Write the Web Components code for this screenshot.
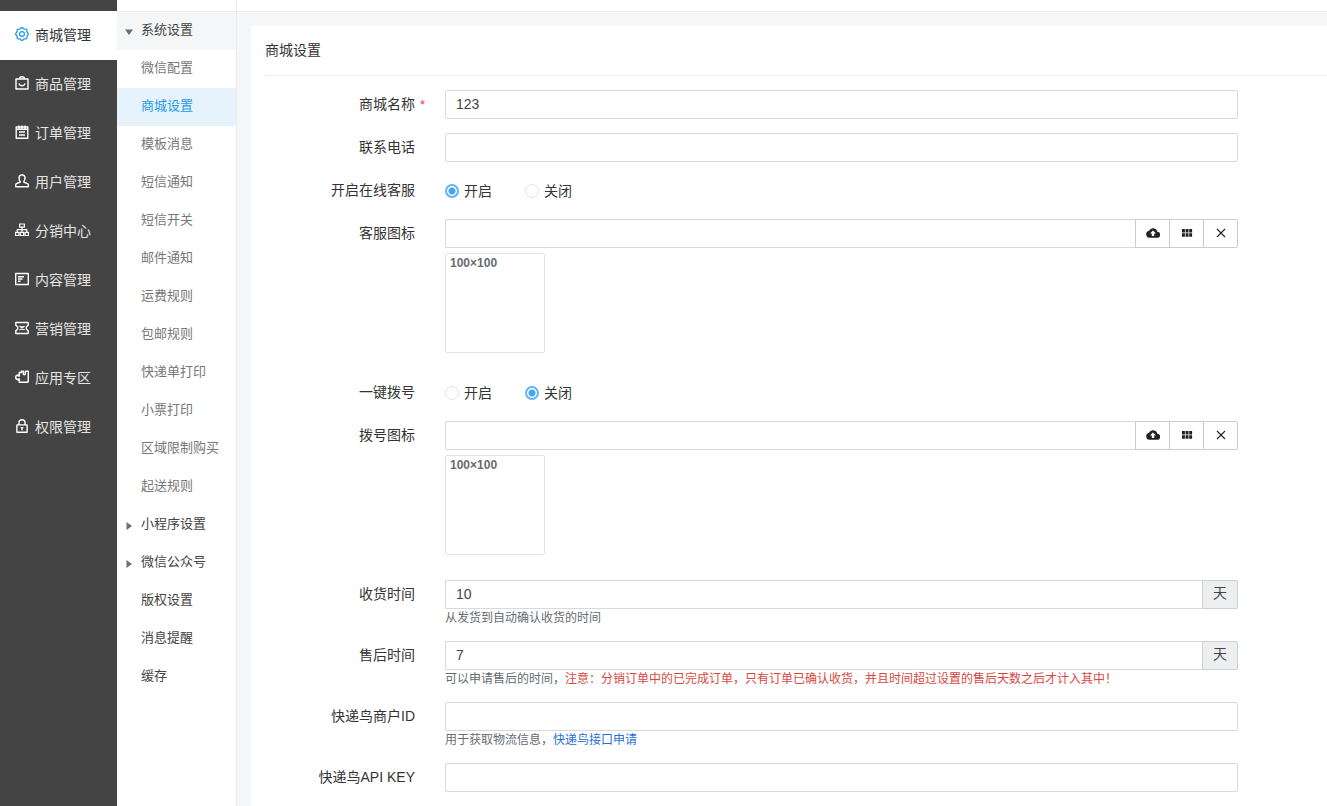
<!DOCTYPE html>
<html lang="zh-CN">
<head>
<meta charset="utf-8">
<title>商城设置</title>
<style>
  html, body { margin: 0; }
  body { font-family: "Liberation Sans", "Noto Sans CJK SC", sans-serif; font-size: 14px; color: #333; background: #f5f6f8; }
</style>
</head>
<body>
<mall-app>
  <main-nav slot="nav">
    <nav-item icon="gear" active>商城管理</nav-item>
    <nav-item icon="bag">商品管理</nav-item>
    <nav-item icon="order">订单管理</nav-item>
    <nav-item icon="user">用户管理</nav-item>
    <nav-item icon="tree">分销中心</nav-item>
    <nav-item icon="article">内容管理</nav-item>
    <nav-item icon="ticket">营销管理</nav-item>
    <nav-item icon="puzzle">应用专区</nav-item>
    <nav-item icon="lock">权限管理</nav-item>
  </main-nav>
  <sub-nav slot="sub">
    <sub-item group="open">系统设置</sub-item>
    <sub-item>微信配置</sub-item>
    <sub-item active>商城设置</sub-item>
    <sub-item>模板消息</sub-item>
    <sub-item>短信通知</sub-item>
    <sub-item>短信开关</sub-item>
    <sub-item>邮件通知</sub-item>
    <sub-item>运费规则</sub-item>
    <sub-item>包邮规则</sub-item>
    <sub-item>快递单打印</sub-item>
    <sub-item>小票打印</sub-item>
    <sub-item>区域限制购买</sub-item>
    <sub-item>起送规则</sub-item>
    <sub-item group="closed">小程序设置</sub-item>
    <sub-item group="closed">微信公众号</sub-item>
    <sub-item group="leaf">版权设置</sub-item>
    <sub-item group="leaf">消息提醒</sub-item>
    <sub-item group="leaf">缓存</sub-item>
  </sub-nav>
  <settings-card heading="商城设置">
    <text-field label="商城名称" value="123" required></text-field>
    <text-field label="联系电话"></text-field>
    <radio-field label="开启在线客服" value="1"></radio-field>
    <upload-field label="客服图标" size="100×100"></upload-field>
    <radio-field label="一键拨号" value="0"></radio-field>
    <upload-field label="拨号图标" size="100×100"></upload-field>
    <text-field label="收货时间" value="10" unit="天"><span>从发货到自动确认收货的时间</span></text-field>
    <text-field label="售后时间" value="7" unit="天"><span>可以申请售后的时间，</span><help-warning>注意：分销订单中的已完成订单，只有订单已确认收货，并且时间超过设置的售后天数之后才计入其中！</help-warning></text-field>
    <text-field label="快递鸟商户ID"><span>用于获取物流信息，</span><help-link>快递鸟接口申请</help-link></text-field>
    <text-field label="快递鸟API KEY"></text-field>
  </settings-card>
</mall-app>

<script>
const svg = (body, size = 14) =>
  `<svg width="${size}" height="${size}" viewBox="0 0 14 14" fill="none" stroke="currentColor" stroke-width="1.4" stroke-linejoin="round" aria-hidden="true">${body}</svg>`;

const scallop = () => {
  const points = [];
  for (let i = 0; i <= 96; i++) {
    const a = i / 96 * Math.PI * 2;
    const r = 5.9 + 0.5 * Math.cos(8 * a);
    points.push((7 + r * Math.cos(a)).toFixed(2) + ' ' + (7 + r * Math.sin(a)).toFixed(2));
  }
  return 'M' + points.join('L') + 'Z';
};

const ICONS = {
  gear: svg(`<path d="${scallop()}" stroke-width="1.3"/><circle cx="7" cy="7" r="2.4" stroke-width="1.2"/>`),
  bag: svg('<path d="M1 3h12v10H1z"/><path d="M4.7 3V2.2Q4.7.7 7 .7t2.3 1.5V3M4 7.4q.6 2.4 3 2.4t3-2.4"/>'),
  order: svg('<path d="M1.2 2h11.6v11.3H1.2zM1.2 4.2h11.6M4 7h6M4 10h6M4 .4v3M7 .4v3M10 .4v3"/>'),
  user: svg('<path d="M7 .9c2 0 3 1.4 3 3.2S9 7.6 8.7 8L12.5 9.7q.8.4.8 1.3v1.7H.7V11q0-.9.8-1.3L5.3 8C5 7.6 4 5.9 4 4.1S5 .9 7 .9z"/>'),
  tree: svg('<path d="M4.6 1h4.800v3.200H4.600zM.6 9.300h3.300v3.200H.6zM5.350 9.300h3.300v3.200h-3.300zM10.100 9.300h3.300v3.200h-3.300zM7 4.200v5M2.200 9V6.700h9.600V9" stroke-width="1.200"/>'),
  article: svg('<path d="M.7 1.500h12.600v11H.7zM3 4.700h6M3 7h4.500M3 9.300h2.500"/>'),
  ticket: svg('<path d="M.8 1.500h12.400v2.700L11.300 6v2l1.900 1.800v2.700H.8V9.800L2.700 8V6L.8 4.200z"/><path d="M4.500 5l5 4M9.500 5l-5 4M7 5v4" stroke-width="1.200"/>'),
  puzzle: svg('<path d="M4.300 5V2.500H6.300V1.200h2v2.300q0 1.200 1 1.200t1-1.200V1.200h3v9.600q0 1.500-1.500 1.500H4.300V9H3.300L2.900 9.800Q.7 9.400.7 7.400T2.900 5l.4.900h1z" stroke-width="1.500"/>'),
  lock: svg('<path d="M1.900 5.900h10.200v7.300H1.900zM4 5.900V3.600Q4 .8 7 .8t3 2.800v2.300M7 8v3.300M5.600 8.600h2.800"/>'),
  cloud: svg('<path fill="currentColor" stroke="none" fill-rule="evenodd" d="M11.300 5.800A4.400 4.400 0 0 0 3 4.700 3.600 3.600 0 0 0 3.500 11.800H11A3 3 0 0 0 11.300 5.800zM8.200 7.500V10H5.800V7.500H4L7 4.500 10 7.500z"/>'),
  grid: svg('<path fill="currentColor" stroke="none" d="M2 3h2.900v3.500H2zM5.600 3h2.900v3.500H5.600zM9.200 3h2.900v3.500H9.200zM2 7.300h2.900v3.500H2zM5.600 7.300h2.900v3.500H5.600zM9.200 7.300h2.900v3.500H9.200z"/>'),
  close: svg('<path d="M3 3l8 8M11 3l-8 8" stroke-width="1.100"/>'),
};

class Base extends HTMLElement {
  connectedCallback() {
    if (this.shadowRoot) return;
    this.attachShadow({ mode: 'open' }).innerHTML = this.render();
  }
  attr(name) { return this.getAttribute(name) || ''; }
}

customElements.define('mall-app', class extends Base {
  render() {
    return `<style>
      :host { display: grid; grid-template-columns: 117px 120px 1fr; grid-template-rows: 12px 1fr; min-height: 100vh; }
      slot[name=nav]::slotted(*) { grid-row: 1 / 3; }
      .corner, header { background: #fff; border-bottom: 1px solid #ebedf0; }
      .corner { border-right: 1px solid #ebedf0; }
      main { padding: 14px 0 0 14px; display: grid; }
    </style>
    <slot name="nav"></slot><div class="corner"></div><header></header>
    <slot name="sub"></slot><main><slot></slot></main>`;
  }
});

customElements.define('main-nav', class extends Base {
  render() {
    return `<style>
      :host { display: block; background: #444; padding-top: 11px; }
      nav { display: flex; flex-direction: column; }
    </style><nav><slot></slot></nav>`;
  }
});

customElements.define('nav-item', class extends Base {
  render() {
    return `<style>
      :host { display: block; color: #fff; }
      :host([active]) { background: #fff; color: #1e9be9; }
      a { display: flex; align-items: center; gap: 6px; height: 49px; box-sizing: border-box; padding: 0 0 2px 15px; color: inherit; text-decoration: none; }
      span { color: #e4e4e4; line-height: 20px; }
      :host([active]) span { color: #333; }
      svg { flex: none; margin-bottom: 2px; }
    </style><a href="#">${ICONS[this.attr('icon')]}<span><slot></slot></span></a>`;
  }
});

customElements.define('sub-nav', class extends Base {
  render() {
    return `<style>
      :host { display: block; background: #fff; border-right: 1px solid #ebedf0; }
      nav { display: flex; flex-direction: column; }
    </style><nav><slot></slot></nav>`;
  }
});

customElements.define('sub-item', class extends Base {
  render() {
    return `<style>
      :host { display: block; font-size: 13px; color: #777; }
      :host([group]) { color: #444; }
      :host([group=open]) { background: #f5f6f8; }
      :host([active]) { background: #e6f2fc; color: #1e9be9; }
      a { display: grid; grid-template-columns: 8px 1fr; column-gap: 8px; align-items: center; height: 38px; box-sizing: border-box; padding: 0 0 2px 8px; line-height: 20px; color: inherit; text-decoration: none; white-space: nowrap; }
      svg { display: block; width: 8px; height: 8px; margin-top: 4px; fill: #6b7075; visibility: hidden; }
      :host([group=open]) svg, :host([group=closed]) svg { visibility: visible; }
      :host([group=closed]) svg { transform: rotate(-90deg); }
    </style><a href="#"><svg viewBox="0 0 8 8" aria-hidden="true"><path d="M0 1.500h8L4 7z"/></svg><span><slot></slot></span></a>`;
  }
});

customElements.define('settings-card', class extends Base {
  render() {
    return `<style>
      :host { display: block; background: #fff; padding: 0 0 14px 14px; }
      h1 { margin: 0 0 14px; font-size: 14px; font-weight: 400; line-height: 20px; padding: 14px 0 15px; border-bottom: 1px solid #ebedf0; }
      form { display: flex; flex-direction: column; gap: 14px; margin-right: 89px; }
    </style><h1>${this.attr('heading')}</h1><form><slot></slot></form>`;
  }
});

const ROW = `
  :host { display: block; }
  .row { display: grid; grid-template-columns: 150px minmax(0, 1fr); column-gap: 30px; align-items: start; }
  .label { text-align: right; line-height: 20px; padding-top: 4px; white-space: nowrap; }
  .group { display: flex; height: 29px; }
  input[type=text] { flex: 1; min-width: 0; height: 29px; box-sizing: border-box; margin: 0; border: 1px solid #d9d9d9; border-radius: 2px; padding: 0 10px 2px; font: inherit; color: #444; background: #fff; outline: 0; }
  .group input:not(:last-child) { border-right: 0; border-radius: 2px 0 0 2px; }
`;

customElements.define('text-field', class extends Base {
  render() {
    const unit = this.attr('unit');
    return `<style>${ROW}
      .required .label { position: relative; }
      .star { position: absolute; left: calc(100% + 5px); top: 5px; color: #f33; font-size: 13px; }
      .unit { width: 36px; box-sizing: border-box; border: 1px solid #cdd0d3; border-radius: 0 2px 2px 0; background: #eceef0; text-align: center; line-height: 25px; color: #444; }
      .help { font-size: 12px; line-height: 18px; color: #666c72; white-space: nowrap; }
    </style>
    <div class="row ${this.hasAttribute('required') ? 'required' : ''}">
      <label class="label" for="field">${this.attr('label')}${this.hasAttribute('required') ? '<span class="star">*</span>' : ''}</label>
      <div><div class="group"><input type="text" id="field" value="${this.attr('value')}">${unit ? `<span class="unit">${unit}</span>` : ''}</div>
      ${this.children.length ? '<div class="help"><slot></slot></div>' : ''}</div>
    </div>`;
  }
});

customElements.define('radio-field', class extends Base {
  render() {
    const option = (value, text) => `<label><input type="radio" name="choice" value="${value}" ${this.attr('value') === value ? 'checked' : ''}><span>${text}</span></label>`;
    return `<style>${ROW}
      .options { display: flex; gap: 33px; height: 29px; align-items: center; }
      .options label { display: flex; align-items: center; gap: 5px; line-height: 20px; }
      input[type=radio] { appearance: none; width: 14px; height: 14px; box-sizing: border-box; margin: 0; border: 1px solid #e2e2e2; border-radius: 50%; background: #fff; }
      input[type=radio]:checked { border: 2px solid #5fb4f7; background: radial-gradient(circle, #42a5f5 3px, #fff 4px); }
    </style>
    <div class="row">
      <div class="label" id="title">${this.attr('label')}</div>
      <div class="options" role="radiogroup" aria-labelledby="title">${option('1', '开启')}${option('0', '关闭')}</div>
    </div>`;
  }
});

customElements.define('upload-field', class extends Base {
  render() {
    return `<style>${ROW}
      button { width: 34px; height: 29px; box-sizing: border-box; padding: 0 0 2px; margin: 0; display: flex; align-items: center; justify-content: center; border: 1px solid #ccc; border-right: 0; background: #fff; color: #222; }
      button:last-child { width: 35px; border-right: 1px solid #ccc; border-radius: 0 2px 2px 0; }
      .preview { width: 100px; height: 100px; box-sizing: border-box; margin: 5px 0 11px; border: 1px solid #e3e3e3; border-radius: 2px; padding: 1px 4px; font-size: 12px; font-weight: 700; line-height: 16px; color: #666c72; }
    </style>
    <div class="row">
      <label class="label" for="field">${this.attr('label')}</label>
      <div><div class="group"><input type="text" id="field">
        <button type="button" aria-label="上传">${ICONS.cloud}</button>
        <button type="button" aria-label="选择">${ICONS.grid}</button>
        <button type="button" aria-label="清除">${ICONS.close}</button></div>
      <div class="preview">${this.attr('size')}</div></div>
    </div>`;
  }
});

customElements.define('help-warning', class extends Base {
  render() { return '<style>:host { display: inline; color: #d9483f; }</style><slot></slot>'; }
});

customElements.define('help-link', class extends Base {
  render() { return '<style>:host { display: inline; } a { color: #2470d8; text-decoration: none; }</style><a href="#"><slot></slot></a>'; }
});
</script>
</body>
</html>
